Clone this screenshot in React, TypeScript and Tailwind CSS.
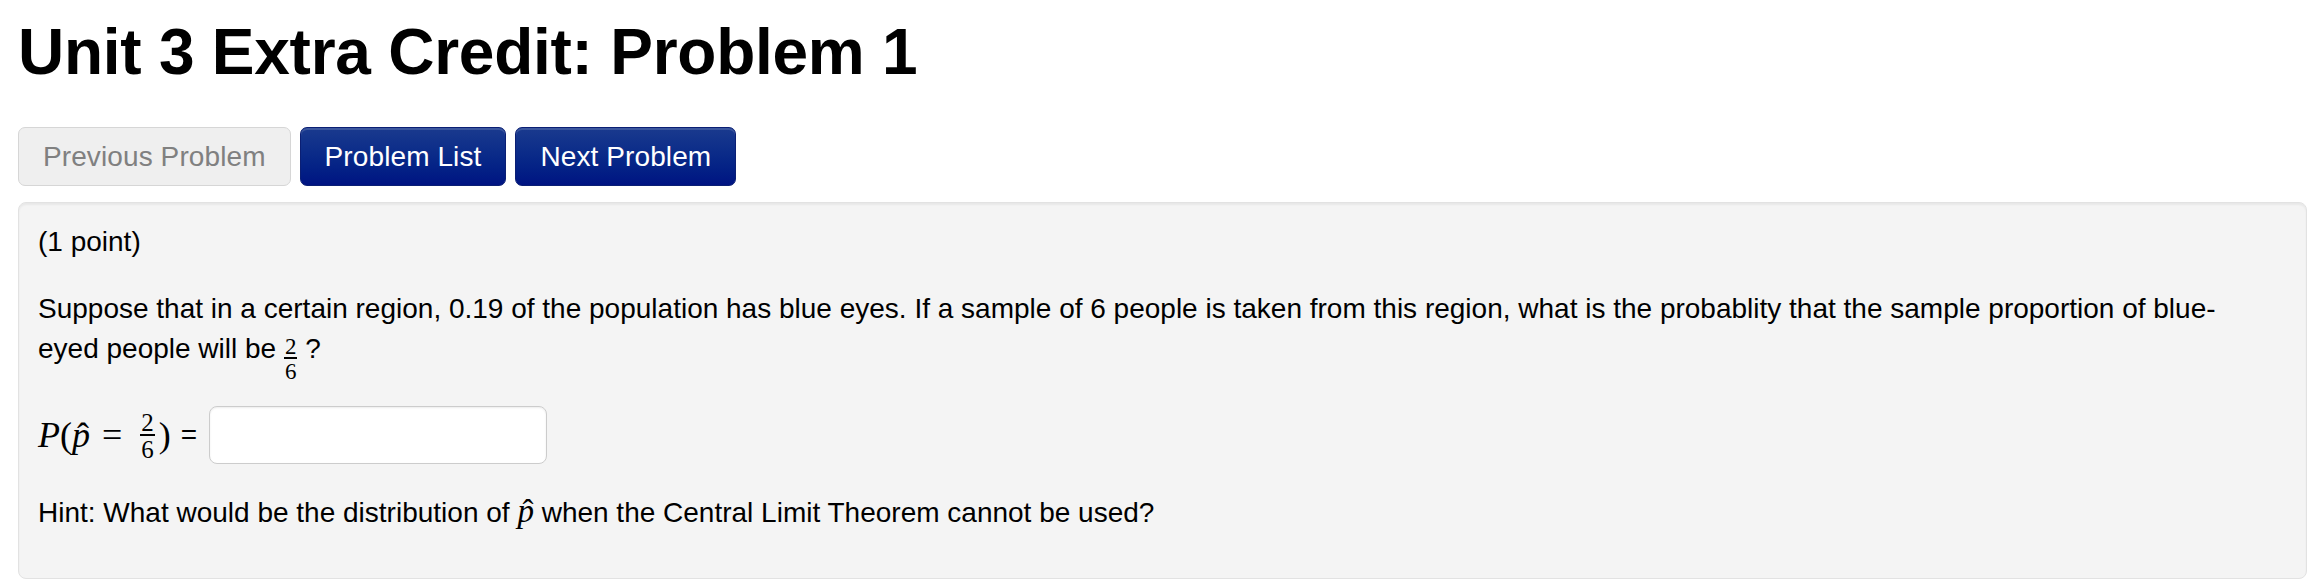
import React from "react";

const sans = "font-['Liberation_Sans',Arial,Helvetica,sans-serif]";
const serif = "font-['Liberation_Serif','Times_New_Roman',serif]";

// inline fraction, MathJax-like
const Frac: React.FC<{ num: string; den: string; size: string }> = ({
  num,
  den,
  size,
}) => (
  <span
    className={`inline-flex flex-col items-center align-middle leading-none -my-4 ${serif} ${size}`}>
    <span className="px-[1px] -mb-[2px]">{num}</span>
    <span className="block h-[1.5px] w-full bg-black my-[1px]" />
    <span className="px-[1px]">{den}</span>
  </span>
);

// p with a hat on top
const PHat: React.FC<{ size: string }> = ({ size }) => (
  <span className={`relative inline-block italic leading-none ${serif} ${size}`}>
    p
    <span className="absolute left-[5px] top-[1px] not-italic">ˆ</span>
  </span>
);

export default function App() {
  return (
    <div className={`min-h-screen bg-white text-black pl-[18px] pr-[4px] ${sans}`}>
      {/* Title */}
      <h1 className="pt-[20px] text-[64px] leading-[64px] font-bold tracking-[-0.25px]">
        Unit 3 Extra Credit: Problem 1
      </h1>

      {/* Navigation */}
      <div className="flex gap-[9px] mt-[43px]">
        <button
          disabled
          className="h-[59px] px-[24px] text-[28px] leading-[40px] tracking-[0.1px] text-[#808080] bg-[#efefef] border border-[#d6d6d6] rounded-[7px]">
          Previous Problem
        </button>
        <button className="h-[59px] px-[24px] text-[28px] leading-[40px] tracking-[0.1px] text-white bg-gradient-to-b from-[#1a3a8e] to-[#001382] border border-[#0b1f74] rounded-[7px] shadow-[inset_0_2px_0_rgba(255,255,255,0.15)]">
          Problem List
        </button>
        <button className="h-[59px] px-[24px] text-[28px] leading-[40px] tracking-[0.1px] text-white bg-gradient-to-b from-[#1a3a8e] to-[#001382] border border-[#0b1f74] rounded-[7px] shadow-[inset_0_2px_0_rgba(255,255,255,0.15)]">
          Next Problem
        </button>
      </div>

      {/* Problem body */}
      <div className="mt-[16px] bg-[#f4f4f4] border border-[#e2e2e2] rounded-[8px] shadow-[inset_0_2px_2px_rgba(0,0,0,0.05)] pt-[19px] pb-[45px] px-[19px] text-[28px] leading-[40px]">
        <div>(1 point)</div>

        <p className="mt-[27px]">
          Suppose that in a certain region, 0.19 of the population has blue
          eyes. If a sample of 6 people is taken from this region, what is the
          probablity that the sample proportion of blue-
          <br />
          eyed people will be{" "}
          <Frac num="2" den="6" size="text-[23px] mt-[1px]" /> ?
        </p>

        <div className="flex items-center mt-[37px] h-[58px]">
          <span className={`flex items-center ${serif} text-[36px] leading-none`}>
            <span className="italic">P</span>
            <span>(</span>
            <PHat size="text-[36px]" />
            <span className="mx-[12px]">=</span>
            <Frac num="2" den="6" size="text-[25px] ml-[6px] -mt-[14px]" />
            <span className="ml-[4px]">)</span>
          </span>
          <span className="ml-[10px] mr-[12px]">=</span>
          <input
            type="text"
            className="w-[338px] h-[58px] bg-white border border-[#cccccc] rounded-[8px] shadow-[inset_0_1px_2px_rgba(0,0,0,0.08)] outline-none px-3"
          />
        </div>

        <p className="mt-[29px]">
          Hint: What would be the distribution of{" "}
          <PHat size="text-[33px]" /> when the Central Limit Theorem cannot be
          used?
        </p>
      </div>
    </div>
  );
}
